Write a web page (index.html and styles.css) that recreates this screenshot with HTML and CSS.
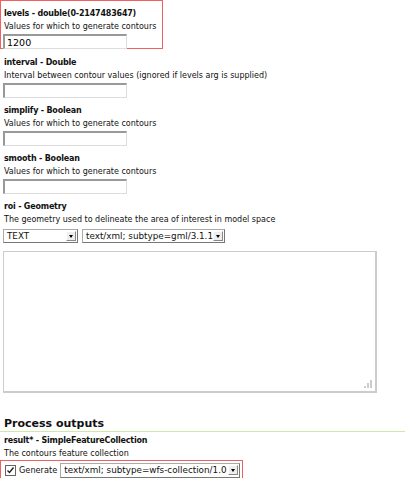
FILE: index.html
```html
<!DOCTYPE html>
<html>
<head>
<meta charset="utf-8">
<link rel="stylesheet" href="styles.css">
</head>
<body>
<div class="field required">
  <div class="label">levels - double(0-2147483647)</div>
  <div class="desc">Values for which to generate contours</div>
  <input class="txt" type="text" value="1200">
</div>
<div class="field">
  <div class="label">interval - Double</div>
  <div class="desc">Interval between contour values (ignored if levels arg is supplied)</div>
  <input class="txt" type="text">
</div>
<div class="field">
  <div class="label">simplify - Boolean</div>
  <div class="desc">Values for which to generate contours</div>
  <input class="txt" type="text">
</div>
<div class="field">
  <div class="label">smooth - Boolean</div>
  <div class="desc">Values for which to generate contours</div>
  <input class="txt" type="text">
</div>
<div class="field roi">
  <div class="label">roi - Geometry</div>
  <div class="desc">The geometry used to delineate the area of interest in model space</div>
  <div class="selects">
    <div class="sel sel-type"><span>TEXT</span><i class="arrow"></i></div>
    <div class="sel sel-mime"><span>text/xml; subtype=gml/3.1.1</span><i class="arrow"></i></div>
  </div>
  <div class="area"><svg class="grip" width="8" height="8" viewBox="0 0 8 8"><rect x="6" y="0" width="2" height="8" fill="#ccc"/><rect x="3" y="3" width="2" height="5" fill="#ccc"/><rect x="0" y="6" width="2" height="2" fill="#ccc"/></svg></div>
</div>
<h2 class="heading">Process outputs</h2>
<div class="out">
  <div class="label">result* - SimpleFeatureCollection</div>
  <div class="desc">The contours feature collection</div>
  <div class="gen">
    <span class="cb"><svg width="9" height="9" viewBox="0 0 9 9"><path d="M1.5 4.5 L3.5 6.5 L7.5 1.5" stroke="#222" stroke-width="1.4" fill="none"/></svg></span>
    <span class="gen-label">Generate</span>
    <div class="sel sel-out"><span>text/xml; subtype=wfs-collection/1.0</span><i class="arrow"></i></div>
  </div>
</div>
</body>
</html>
```
FILE: styles.css
```css
html, body { margin: 0; padding: 0; background: #fff; }
body {
  font-family: "DejaVu Sans", Verdana, sans-serif;
  font-size: 8px;
  color: #111;
  width: 405px;
  overflow: hidden;
}
.field { padding: 7px 0 0 4px; height: 41px; }
.field.roi { height: auto; }
.field.required {
  border: 1px solid #f06060;
  width: 158px;
  padding: 6px 0 2px 3px;
  height: 39px;
}
.label { font-weight: bold; line-height: 13px; letter-spacing: -0.2px; }
.desc { line-height: 13px; white-space: nowrap; }
.txt {
  box-sizing: border-box;
  display: block;
  width: 124px;
  height: 15px;
  margin: 1px 0 0 -1px;
  padding: 0 2px;
  border: 1px solid #ddd;
  border-top: 2px solid #999;
  border-left: 2px solid #999;
  font-family: "DejaVu Sans", sans-serif;
  font-size: 9.5px;
  color: #000;
  outline: none;
}
.selects { display: flex; gap: 4px; margin: 3px 0 0 -1px; }
.sel {
  box-sizing: border-box;
  height: 14px;
  border: 1px solid #aaa;
  border-right-color: #777;
  border-bottom-color: #777;
  display: flex;
  align-items: center;
  justify-content: space-between;
  padding: 0 1px 0 3px;
  font-size: 8.8px;
  white-space: nowrap;
  background: #fff;
  overflow: hidden;
}
.sel-type { width: 75px; }
.sel-mime { width: 143px; }
.arrow {
  flex: none;
  width: 10px; height: 10px; box-sizing: border-box;
  border: 1px solid #fff; border-right-color: #888; border-bottom-color: #888;
  background: #eee; position: relative;
}
.arrow::after {
  content: ""; position: absolute; left: 2px; top: 3px;
  border-left: 2px solid transparent; border-right: 2px solid transparent; border-top: 3px solid #000;
}
.area {
  box-sizing: border-box;
  position: relative;
  width: 374px;
  height: 142px;
  margin: 8px 0 0 -1px;
  border: 1px solid #ccc;
  border-bottom-width: 2px;
  border-right-width: 2px;
}
.grip { position: absolute; right: 3px; bottom: 3px; }
.heading {
  margin: 0;
  padding: 24px 0 0 4px;
  font-size: 11px;
  font-weight: bold;
  line-height: 14px;
  border-bottom: 1px solid #cfe8a4;
}
.out { padding: 2px 0 0 4px; }
.gen {
  display: flex;
  align-items: center;
  gap: 2px;
  margin: 0 0 0 -4px;
  width: 243px;
  height: 20px;
  box-sizing: border-box;
  border: 1px solid #f06060;
  padding-left: 4px;
}
.cb {
  width: 9px; height: 9px; border: 1px solid #666; display: inline-flex;
  box-sizing: content-box; margin-right: 1px;
}
.gen-label { font-size: 8.2px; }
.sel-out { width: 180px; height: 15px; margin-left: 1px; }
```
